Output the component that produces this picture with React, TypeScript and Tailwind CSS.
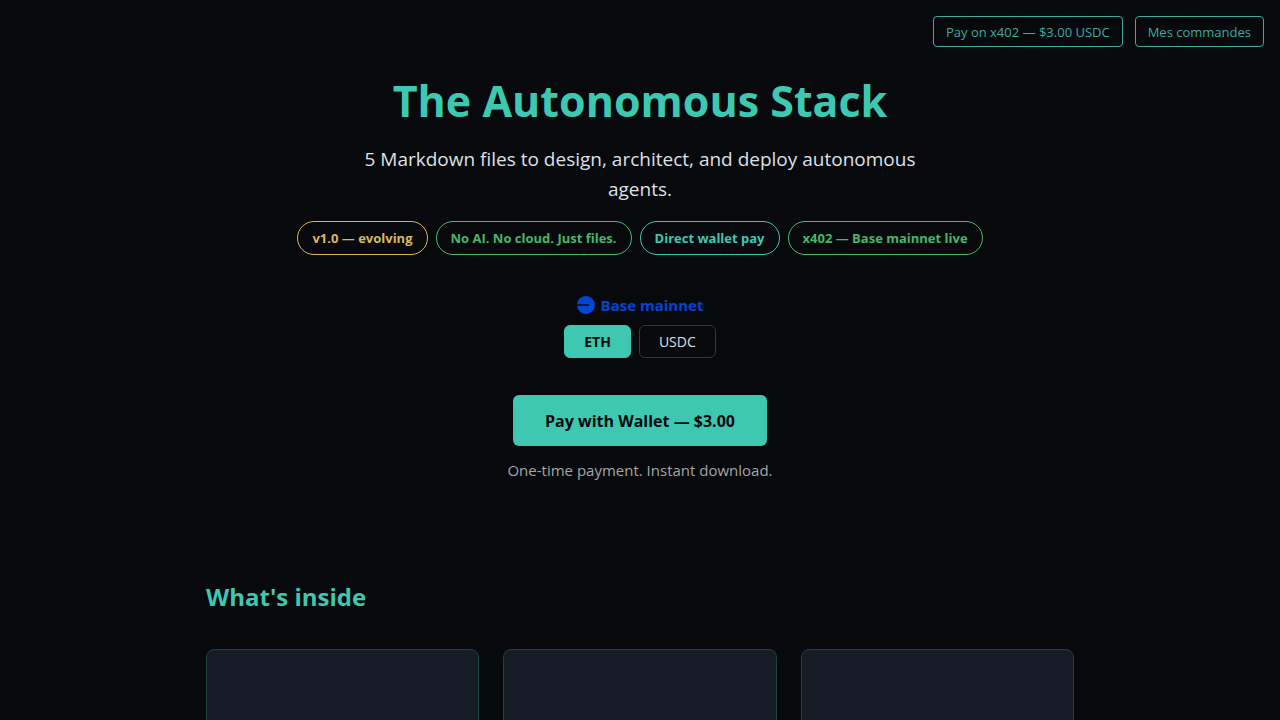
import { useState } from "react";

const badges = [
  { label: "v1.0 — evolving", tone: "border-[#e0b84c] text-[#d9b85f]" },
  { label: "No AI. No cloud. Just files.", tone: "border-[#48bb6a] text-[#48b56a]" },
  { label: "Direct wallet pay", tone: "border-[#3ec8b2] text-[#3ec8b2]" },
  { label: "x402 — Base mainnet live", tone: "border-[#48bb6a] text-[#48b56a]" },
];

const tokens = ["ETH", "USDC"];

const topLink =
  "rounded border border-[#3fa99c] px-3 pt-[5px] pb-1 text-[13px] leading-5 text-[#3fa99c]";

function BaseLogo() {
  return (
    <svg className="size-[18px]" viewBox="0 0 111 111" fill="none" aria-hidden="true">
      <path
        d="M54.9 110.5c30.4 0 55.1-24.7 55.1-55.1S85.3.3 54.9.3C26 .3 2.4 22.4 0 50.7h72.7v9.2H0C2.4 88.2 26 110.5 54.9 110.5Z"
        fill="#0045d4"
      />
    </svg>
  );
}

export default function App() {
  const [token, setToken] = useState("ETH");

  return (
    <div className="min-h-screen bg-[#07090d] font-['Open_Sans',sans-serif] text-[#dde0e6]">
      <nav className="flex justify-end gap-3 px-4 pt-4">
        <a href="#x402" className={topLink}>Pay on x402 — $3.00 USDC</a>
        <a href="#commandes" className={topLink}>Mes commandes</a>
      </nav>

      <main>
        <section className="flex flex-col items-center px-6 pt-6 text-center">
          <h1 className="text-[43px] leading-[60px] font-bold text-[#3ec8b2]">The Autonomous Stack</h1>
          <p className="mt-[13px] max-w-[600px] text-[19px] leading-[30px]">
            5 Markdown files to design, architect, and deploy autonomous agents.
          </p>
          <ul className="mt-[17px] flex flex-wrap justify-center gap-2">
            {badges.map((b) => (
              <li
                key={b.label}
                className={`rounded-full border px-[14px] py-[6px] text-[13px] leading-5 font-bold ${b.tone}`}
              >
                {b.label}
              </li>
            ))}
          </ul>

          <div className="mt-[38px] flex items-center gap-[6px] text-[15px] leading-6 font-bold text-[#0045d4]">
            <BaseLogo />
            Base mainnet
          </div>
          <div className="mt-2 flex gap-2">
            {tokens.map((t) => (
              <button
                key={t}
                type="button"
                aria-pressed={token === t}
                onClick={() => setToken(t)}
                className={`rounded-md border px-[19px] py-[5px] text-[14px] leading-[21px] ${
                  token === t
                    ? "border-[#3ec8b2] bg-[#3ec8b2] font-bold text-[#07090d]"
                    : "border-[#1a443c]"
                }`}
              >
                {t}
              </button>
            ))}
          </div>

          <button
            type="button"
            className="mt-[37px] rounded-md bg-[#3ec8b2] px-8 pt-[14px] pb-3 text-base leading-[25px] font-bold text-[#07090d]"
          >
            Pay with Wallet — $3.00
          </button>
          <p className="mt-3 text-[15px] leading-6 text-[#a3a5aa]">One-time payment. Instant download.</p>
        </section>

        <section className="mx-auto mt-[97px] max-w-[916px] px-6">
          <h2 className="text-2xl leading-9 font-bold text-[#3ec8b2]">What's inside</h2>
          <div className="mt-[34px] grid grid-cols-3 gap-6">
            {[1, 2, 3].map((n) => (
              <div key={n} className="h-48 rounded-lg border border-[#1a443c] bg-[#151c25]" />
            ))}
          </div>
        </section>
      </main>
    </div>
  );
}
